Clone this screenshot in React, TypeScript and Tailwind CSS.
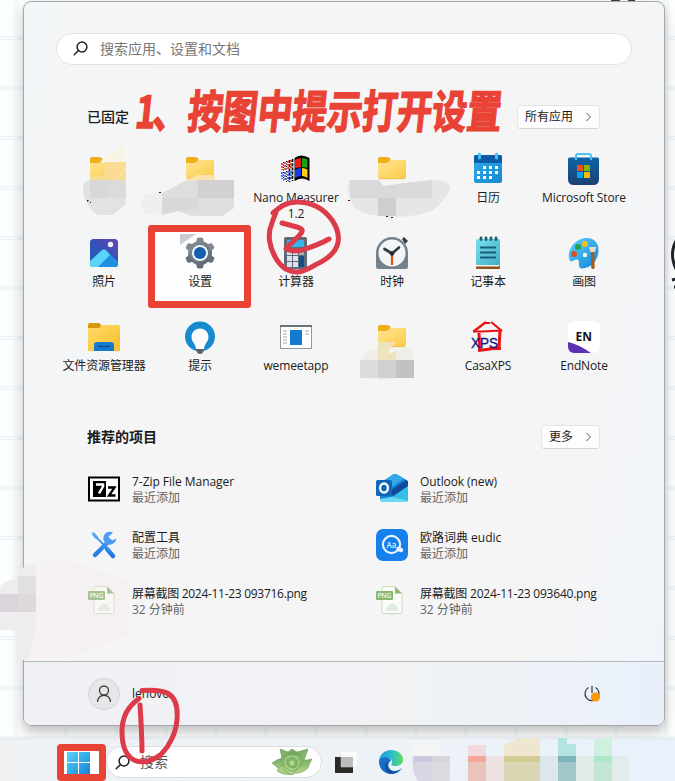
import React from "react";

const Svg = ({ children }: { children: React.ReactNode }) => (
  <svg width="32" height="32" viewBox="0 0 32 32" className="block shrink-0 overflow-visible">
    {children}
  </svg>
);

const Defs = () => (
  <svg width="0" height="0" className="absolute">
    <defs>
      <linearGradient id="fold" x1="0" y1="0" x2="1" y2="1">
        <stop offset="0" stopColor="#ffe596" />
        <stop offset="1" stopColor="#fccb45" />
      </linearGradient>
      <linearGradient id="foldBig" x1="0" y1="0" x2="1" y2="1">
        <stop offset="0" stopColor="#ffdc68" />
        <stop offset="1" stopColor="#f8bd2b" />
      </linearGradient>
      <linearGradient id="photo" x1="0" y1="1" x2="1" y2="0">
        <stop offset="0" stopColor="#1466c0" />
        <stop offset="0.5" stopColor="#3451b8" />
        <stop offset="1" stopColor="#6a45ae" />
      </linearGradient>
      <linearGradient id="sky" x1="0" y1="0" x2="1" y2="1">
        <stop offset="0" stopColor="#5ad4fa" />
        <stop offset="1" stopColor="#1583d8" />
      </linearGradient>
      <linearGradient id="cal" x1="0" y1="0" x2="1" y2="1">
        <stop offset="0" stopColor="#30adea" />
        <stop offset="1" stopColor="#1587d2" />
      </linearGradient>
      <linearGradient id="store" x1="0" y1="0" x2="0" y2="1">
        <stop offset="0" stopColor="#0d64a9" />
        <stop offset="1" stopColor="#1b3f72" />
      </linearGradient>
      <linearGradient id="steel" gradientUnits="userSpaceOnUse" x1="4" y1="2" x2="28" y2="28">
        <stop offset="0" stopColor="#8b949c" />
        <stop offset="1" stopColor="#5a636d" />
      </linearGradient>
      <linearGradient id="note" x1="0" y1="0" x2="1" y2="1">
        <stop offset="0" stopColor="#7be0ec" />
        <stop offset="1" stopColor="#43abc6" />
      </linearGradient>
      <linearGradient id="edge" x1="0" y1="0" x2="1" y2="0">
        <stop offset="0" stopColor="#1c9ddd" />
        <stop offset="0.55" stopColor="#2bc0cb" />
        <stop offset="1" stopColor="#62dc55" />
      </linearGradient>
      <linearGradient id="tool" gradientUnits="userSpaceOnUse" x1="0" y1="4" x2="0" y2="28">
        <stop offset="0" stopColor="#5aa8f8" />
        <stop offset="1" stopColor="#1f78e6" />
      </linearGradient>
      <linearGradient id="leaf" x1="0" y1="0" x2="0" y2="1">
        <stop offset="0" stopColor="#74aa60" />
        <stop offset="1" stopColor="#b8d989" />
      </linearGradient>
    </defs>
  </svg>
);

const Folder = () => (
  <Svg>
    <path d="M2 5q0-2 2-2h7q2 0 3 1.500l1 2L12 10H2z" fill="#efaf1c" />
    <path d="M2 9h8q1.600 0 2.500-1.200L14 6h16v17q0 2-2 2H4q-2 0-2-2z" fill="url(#fold)" />
    <path d="M3 24.700h26" stroke="#e9b549" strokeWidth=".7" />
  </Svg>
);

const Explorer = () => (
  <Svg>
    <path d="M0 3q0-2 2-2h9l3 3v4H0z" fill="#d49a0b" />
    <path d="M0 6h11l3-3h16q2 0 2 2v24H0z" fill="url(#foldBig)" />
    <path d="M6 29v-6q0-3 3-3h14q3 0 3 3v6z" fill="#147bd0" />
    <path d="M10 24.500h12" stroke="#0a4e8e" strokeWidth="1.300" />
  </Svg>
);

const NanoFlag = () => (
  <Svg>
    <path d="M14.500 4Q21-1 29.500 4v23q-7-5-15 0z" fill="#000" />
    <path d="M15 6q3-2 6-2v9q-3 0-6 1.500z" fill="#f01c1c" />
    <path d="M22 4q3 0 5.500 1.500v8.500q-3-1-5.500-1z" fill="#14a514" />
    <path d="M15 16q3-2 6-2v8q-3 0-6 2z" fill="#123df0" />
    <path d="M22 14q3 0 5.500 1.500V24q-3-2-5.500-2z" fill="#ffcf18" />
    <path d="M12.500 5v22M9.500 6v22" stroke="#000" strokeWidth="1.600" strokeDasharray="3 1.200" />
    <path d="M6.500 7v21M3.500 8v20" stroke="#000" strokeWidth="1" strokeDasharray="1 1.500" />
    <path d="M11 6v9M8 7v9M5 8v8M2 9v7" stroke="#f01c1c" strokeWidth="1.500" strokeDasharray="2 1" />
    <path d="M11 17v9M8 17v10M5 18v8M2 18v7" stroke="#1c49f0" strokeWidth="1.500" strokeDasharray="2 1" />
  </Svg>
);

const Calendar = () => (
  <Svg>
    <rect x="2" y="1" width="28" height="28" rx="2" fill="url(#cal)" />
    <path d="M2 9V3q0-2 2-2h24q2 0 2 2v6z" fill="#0d5aa5" />
    <path d="M7.500 0v4M24.500 0v4" stroke="#43c4f4" strokeWidth="3" strokeLinecap="round" />
    <path d="M11 12h3v3h-3zM17 12h3v3h-3zM23 12h3v3h-3zM5 17h3v3H5zM11 17h3v3h-3zM17 17h3v3h-3zM23 17h3v3h-3zM5 22h3v3H5zM11 22h3v3h-3zM17 22h3v3h-3z" fill="#fff" />
  </Svg>
);

const Store = () => (
  <Svg>
    <path d="M0 5q0-1.500 1.500-1.500h28Q31 3.500 31 5v20q0 6-6 6H6q-6 0-6-6z" fill="url(#store)" />
    <path d="M8 6V2q0-2 2-2h11q2 0 2 2v4" fill="none" stroke="#4cc3ef" strokeWidth="2" />
    <path d="M9 11h6v6H9z" fill="#f25022" />
    <path d="M16 11h6v6h-6z" fill="#7fba00" />
    <path d="M9 18h6v6H9z" fill="#00a4ef" />
    <path d="M16 18h6v6h-6z" fill="#ffb900" />
  </Svg>
);

const Photos = () => (
  <Svg>
    <clipPath id="photoClip"><rect x="2" y="1" width="28" height="28" rx="3.500" /></clipPath>
    <g clipPath="url(#photoClip)">
      <rect x="2" y="1" width="28" height="28" fill="url(#photo)" />
      <path d="M0 26 13.500 12.500q2.500-2.500 5 0L32 26v5H0z" fill="#1f8fe0" />
      <path d="M-2 27 13.500 12.500q2.500-2 5 .5L22 17 8 31z" fill="#5bd3f6" />
      <circle cx="22.500" cy="6.500" r="2.700" fill="#ecf3ff" />
    </g>
  </Svg>
);

const Settings = () => (
  <Svg>
    <g fill="url(#steel)">
      <circle cx="16" cy="15" r="12" />
      <path d="m12 5 1-5q3-1 6 0l1 5zM12 25l1 5q3 1 6 0l1-5z" />
      <path d="m12 5 1-5q3-1 6 0l1 5zM12 25l1 5q3 1 6 0l1-5z" transform="rotate(60 16 15)" />
      <path d="m12 5 1-5q3-1 6 0l1 5zM12 25l1 5q3 1 6 0l1-5z" transform="rotate(-60 16 15)" />
    </g>
    <circle cx="16" cy="15" r="8" fill="#eef4f9" />
    <circle cx="16" cy="15" r="6" fill="#155dad" />
  </Svg>
);

const Calculator = () => (
  <Svg>
    <rect x="4" y="-1" width="23" height="32" rx="2" fill="#5e6b78" />
    <rect x="7" y="2" width="17" height="7" rx=".8" fill="#35b7ea" />
    <path d="M7 12h5v5H7zM13 12h5v5h-5zM7 18h5v5H7zM13 18h5v5h-5zM7 24h5v5H7zM13 24h5v5h-5z" fill="#dce3e8" />
    <path d="M19 12h5v5h-5z" fill="#a6b2bd" />
    <path d="M19 18h5v11h-5z" fill="#164f87" />
  </Svg>
);

const Clock = () => (
  <Svg>
    <path d="m26 1 2-2 4 4-3 3z" fill="#343c45" />
    <path d="M0 15a16 16 0 0 1 32 0v14q0 2-2 2H2q-2 0-2-2z" fill="#75818b" />
    <circle cx="16" cy="15" r="13.500" fill="#f3f5f6" />
    <path d="m16 15.500-7.500-4.500M16 15.500l7-6" stroke="#343b42" strokeWidth="2.700" strokeLinecap="round" />
    <path d="M16 16v11" stroke="#db5420" strokeWidth="2.200" />
    <circle cx="16" cy="15.500" r="2.200" fill="#252b31" />
  </Svg>
);

const Notepad = () => (
  <Svg>
    <path d="M4 26h24v4q0 1-1 1H5q-1 0-1-1z" fill="#8b5219" />
    <path d="M4 26h24l-1 2.500H4z" fill="#f8f1e2" />
    <rect x="4" y="1" width="24" height="26" rx="1.500" fill="url(#note)" />
    <path d="M9 0v1.500M14 0v1.500M19 0v1.500M24 0v1.500" stroke="#185f70" strokeWidth="2.800" strokeLinecap="round" />
    <path d="M8 9.500h16M8 14.500h16M8 19.500h16" stroke="#155f78" strokeWidth="2" />
  </Svg>
);

const Paint = () => (
  <Svg>
    <path d="M17 0C26-1 31 5 30.500 13c-.5 10-8 17-16 17.500-6 0-2-7-4.500-8.500-3-2-6 4-8.500 0C-2 12 7 1 17 0z" fill="url(#sky)" />
    <circle cx="17" cy="17" r="2.200" fill="#f5f7f9" />
    <circle cx="17" cy="6" r="3" fill="#f4bd24" />
    <circle cx="10" cy="9" r="3" fill="#21a34d" />
    <circle cx="6" cy="16" r="3" fill="#d95025" />
    <path d="M21 9h7.500l-2 5.500h-4z" fill="#eadac0" />
    <path d="M23 14h3.200l.5 16q-2 2-3.500 0z" fill="#a35d20" />
  </Svg>
);

const Tips = () => (
  <Svg>
    <circle cx="16" cy="14.500" r="15" fill="#178bcf" />
    <path d="M16 6.500c-5 0-8.500 4-8.500 8.500 0 5 4 6.500 4.500 12h8c.5-5.500 4.500-7 4.500-12 0-4.500-3.500-8.500-8.500-8.500z" fill="#fbfbfb" />
    <path d="M12 27h8q-.5 5-4 5t-4-5z" fill="#5d6468" />
  </Svg>
);

const Wemeet = () => (
  <Svg>
    <path d="M.5 3.500h31v23H.500z" fill="#fff" stroke="#8e989f" />
    <path d="M0 3h32v2H0z" fill="#68737a" />
    <rect x="10" y="8" width="12" height="15" fill="#157bd0" />
    <path d="M3 9h4M3 12h4M3 15h4M3 18h4M3 21h4M25 9h4M25 12h4" stroke="#a6a6a6" />
  </Svg>
);

const CasaXPS = () => (
  <Svg>
    <g stroke="#ec1111" fill="none">
      <path d="M1.500 9.500 14 0M19 0l11 9" strokeWidth="2.200" />
      <path d="M1 9.500h10M10 9.500l19-1M12 1h6" strokeWidth="2" />
      <path d="M7 11l1 18M28 9l-1 17" strokeWidth="3" />
      <path d="M6 28.500l13-1.500M17 26.500h12" strokeWidth="2.800" />
    </g>
    <text x="-1" y="26" fontFamily="Liberation Sans, Arial, sans-serif" fontSize="14.500" fill="#101184" stroke="#101184" strokeWidth=".3" textLength="27" lengthAdjust="spacingAndGlyphs">XPS</text>
  </Svg>
);

const EndNote = () => (
  <Svg>
    <clipPath id="enClip"><rect y="-1" width="32" height="32" rx="6" /></clipPath>
    <g clipPath="url(#enClip)">
      <rect y="-1" width="32" height="32" fill="#fff" />
      <path d="M0 20q10 2 23 11H0z" fill="#5b32b4" />
    </g>
    <text x="7.500" y="19" fontFamily="Noto Sans, sans-serif" fontWeight="700" fontSize="12.500" fill="#111" textLength="16.500" lengthAdjust="spacingAndGlyphs">EN</text>
  </Svg>
);

const SevenZip = () => (
  <Svg>
    <path d="M1 4.500h30v23H1z" fill="#fff" stroke="#000" strokeWidth="2" />
    <path d="M5 8h13v16H5z" fill="#000" />
    <path d="M8 11.500h7v2l-4 7" fill="none" stroke="#fff" strokeWidth="2.500" />
    <path d="M20 14.500h6.500l-5.500 8h6.500" fill="none" stroke="#000" strokeWidth="2.300" />
  </Svg>
);

const Tools = () => (
  <Svg>
    <g fill="none" stroke="url(#tool)" strokeLinecap="round">
      <path d="m6 6 12 12" strokeWidth="1.800" />
      <path d="m5.500 5 3 3.500" strokeWidth="3.200" />
      <path d="m19 20 6 7" strokeWidth="4.500" />
      <path d="M7 26 20 13" strokeWidth="4.500" />
    </g>
    <path d="M25 3.500a6.500 6.500 0 1 0 3.300 6l-4 2-4-3.500z" fill="#4b9bf3" />
  </Svg>
);

const Png = () => (
  <Svg>
    <path d="M8 1.500h11l7 7v18q0 2-2 2H8q-2 0-2-2v-23q0-2 2-2z" fill="#fbfcf9" stroke="#cbdcb9" />
    <path d="M19 1.500v7h7z" fill="#8fb878" />
    <path d="M10 26q-1-4 2-4 1-5 5-3 3-1 3 2 3 1 2 5z" fill="#e1ece1" />
    <rect y="6" width="17" height="9" rx="1" fill="#8ab673" />
    <text x="1.500" y="13.200" fontFamily="Open Sans, sans-serif" fontSize="7" fontWeight="600" fill="#edf7e7" textLength="14">PNG</text>
  </Svg>
);

const Outlook = () => (
  <Svg>
    <path d="M4 10 17 1.500q2-1 4 0L32 8v18q0 3-3 3H8q-4 0-4-4z" fill="#1685d9" />
    <path d="m6 9 11-7.500q2-1 4 0l7 4-13 9z" fill="#32a8e8" />
    <path d="m15 17 15-10 2 1.500v5L17 24z" fill="#124b9b" />
    <path d="M32 13v13q0 3-3 3H8q-3 0-4-3l12-2z" fill="#34bde9" />
    <path d="m16 24 15.500 3.500q-1 1.500-2.500 1.500H8q-3 0-4-3z" fill="#6bdaf3" />
    <rect y="7" width="16" height="16" rx="1.500" fill="#1068bd" />
    <ellipse cx="8" cy="15" rx="3.900" ry="4.500" fill="none" stroke="#fff" strokeWidth="2.300" />
  </Svg>
);

const Eudic = () => (
  <Svg>
    <rect width="32" height="32" rx="7" fill="#1680ed" />
    <circle cx="15.500" cy="15.500" r="8.600" fill="none" stroke="#e9f6ff" strokeWidth="2.200" />
    <path d="m22.500 20 2.500 1" stroke="#e9f6ff" strokeWidth="4.500" strokeLinecap="round" />
    <text x="10.500" y="18.500" fontFamily="Open Sans, sans-serif" fontSize="8" fontWeight="600" fill="#d8f0ff">Aa</text>
  </Svg>
);

const SearchIcon = () => (
  <svg width="15" height="15" viewBox="0 0 15 15" fill="none" stroke="#222" strokeWidth="1.500" strokeLinecap="round">
    <circle cx="9" cy="6" r="4.900" />
    <path d="m5.500 9.500-4.300 4.300" />
  </svg>
);

const MoreButton = ({ children }: { children: React.ReactNode }) => (
  <button className="flex h-6 items-center gap-3 rounded border border-[#e3e4e5] border-b-[#d3d4d5] bg-[#fdfdfd] px-[7px] text-[12px] text-[#1b1b1b]">
    {children}
    <svg width="7" height="10" viewBox="0 0 7 10" fill="none" stroke="#555" className="block">
      <path d="m1.500 1 4 4-4 4" />
    </svg>
  </button>
);

const apps: { name: string; icon: React.ReactNode; marked?: boolean }[] = [
  { name: "", icon: <Folder /> },
  { name: "", icon: <Folder /> },
  { name: "Nano Measurer 1.2", icon: <NanoFlag /> },
  { name: "", icon: <Folder /> },
  { name: "日历", icon: <Calendar /> },
  { name: "Microsoft Store", icon: <Store /> },
  { name: "照片", icon: <Photos /> },
  { name: "设置", icon: <Settings />, marked: true },
  { name: "计算器", icon: <Calculator /> },
  { name: "时钟", icon: <Clock /> },
  { name: "记事本", icon: <Notepad /> },
  { name: "画图", icon: <Paint /> },
  { name: "文件资源管理器", icon: <Explorer /> },
  { name: "提示", icon: <Tips /> },
  { name: "wemeetapp", icon: <Wemeet /> },
  { name: "", icon: <Folder /> },
  { name: "CasaXPS", icon: <CasaXPS /> },
  { name: "EndNote", icon: <EndNote /> },
];

const recent = [
  { name: "7-Zip File Manager", note: "最近添加", icon: <SevenZip />, fit: "tracking-[-0.04px]" },
  { name: "Outlook (new)", note: "最近添加", icon: <Outlook />, fit: "tracking-[-0.1px]" },
  { name: "配置工具", note: "最近添加", icon: <Tools />, fit: "" },
  { name: "欧路词典 eudic", note: "最近添加", icon: <Eudic />, fit: "" },
  { name: "屏幕截图 2024-11-23 093716.png", note: "32 分钟前", icon: <Png />, fit: "tracking-[-0.29px]" },
  { name: "屏幕截图 2024-11-23 093640.png", note: "32 分钟前", icon: <Png />, fit: "tracking-[-0.22px]" },
];

/* Privacy mosaic over the panel and the taskbar */
const Mosaic = () => (
  <svg width="675" height="781" viewBox="0 0 675 781" className="pointer-events-none absolute inset-0">
    <path d="M611 0h9v1h-9zM628 0h7v1h-7z" fill="#493238" />
    <path d="M676 241q-7 13 0 28M672 280l4-1M674 287h3" fill="none" stroke="#20222a" strokeWidth="3" />
    <path d="M102 160 125 143v20h-23z" fill="#f6f4e4" />
    <path d="M104 162h22v18H90v-4h14z" fill="#f9dc91" />
    <path d="m117 178 9-9" stroke="#fff2cb" />
    <path d="M90 180h36v24l-13 11H97l-7-7q-7-10-7-19 0-9 7-9z" fill="#e2e2e2" />
    <path d="M90 180h18v18H90z" fill="#d8d8d8" />
    <path d="M108 180h18v18h-18z" fill="#dcdbd9" />
    <path d="M87 200h1.500v1.500H87zM90 202h1v1h-1zM159 192h2v1h-2z" fill="#222" />
    <path d="M145 195q9-4 17-1v21h-15q-11-8-2-20z" fill="#efefef" />
    <path d="m185 181 13-6h17v5z" fill="#fae3ab" />
    <path d="m162 193 23-12 13-1h36v28l-12 8h-30l-14-5-16 4z" fill="#dedede" />
    <path d="M198 180h36v18h-36z" fill="#d1d1d1" />
    <path d="M162 198h36v11l-20 2-16 3z" fill="#d8d8d8" />
    <path d="M350 180h29l4 6 49-6q20 1 18 9-3 10-18 22-24 8-48 5-30-1-33-16-6-13-1-20z" fill="#e6e6e6" />
    <path d="M350 180h29l4 6 33-4v16h-66z" fill="#d9d9d9" />
    <path d="m396 184 36-4v18h-36z" fill="#dadada" />
    <path d="M378 198h18v18h-18z" fill="#cecece" />
    <path d="M348 200h2v1h-2zM386 216h2v1h-2zM391 217h2v1h-2z" fill="#222" />
    <path d="M180 234h16l-16 11z" fill="#c8ccd1" />
    <path d="M378 342h17l-8 12 19-7q9 0 8 17-4 15-30 16-24 0-24-16 0-13 18-15z" fill="#eeede8" />
    <path d="M378 342h17l-8 12 9-3v9h-18z" fill="#efe3be" />
    <path d="M360 360h18v18h-18z" fill="#dddddc" />
    <path d="M378 360h18v18h-18z" fill="#d1d0ce" />
    <path d="M396 360h18v18h-18z" fill="#c3c2c1" />
    <path d="M22 570q5-9 15-8l30-2 61 20v54l-50 22-56 4z" fill="#f7e9ea" fillOpacity=".25" />
    <path d="M0 590q4-11 18-12v-5l8-8h10v65l-8 30H18v-30H0z" fill="#eeecee" />
    <path d="M18 576h18v18H18z" fill="#e2dfe1" />
    <path d="M0 594h18v18H0z" fill="#d9d5da" />
    <path d="M18 594h18v18H18z" fill="#dcd8dc" />
    <path d="M414 740h26v16h-28q-2-9 2-16z" fill="#f3f4f4" />
    <path d="M413 756h37v25h-32q-7-8-5-25z" fill="#d9d5e5" />
    <path d="M432 762h18v19h-18z" fill="#dcdce0" />
    <path d="M414 756h18v6h-18z" fill="#cbc7df" />
    <path d="M432 756h18v6h-18z" fill="#d7d6dc" />
    <path d="M468 745h18v11h-18z" fill="#f0dadd" />
    <path d="M468 756h18v6h-18z" fill="#f2a799" />
    <path d="M468 762h18v19h-18z" fill="#eac3bc" />
    <path d="M486 756h18v25h-18z" fill="#ede1e2" />
    <path d="m504 745 15-7h21v18h-36z" fill="#efe6d0" />
    <path d="M504 756h36v6h-36z" fill="#d2cb92" />
    <path d="M504 762h36v19h-36z" fill="#dbd7b4" />
    <path d="M540 756h18v25h-18z" fill="#dce7ea" />
    <path d="M558 738h9v6h9v12h-18z" fill="#b3e3e2" />
    <path d="M558 756h18v6h-18z" fill="#7db5bb" />
    <path d="M558 762h18v19h-18z" fill="#a3c8cb" />
    <path d="M576 756h18v25h-18z" fill="#dfeae9" />
    <path d="m594 740 8-2h10v18h-18z" fill="#d0f0df" />
    <path d="M594 756h18v6h-18z" fill="#ace8c7" />
    <path d="M594 762h18v19h-18z" fill="#c2e5d5" />
    <path d="M612 756h17v25h-17z" fill="#e2ecec" />
  </svg>
);

/* Hand-drawn step markers */
const Strokes = () => (
  <svg width="675" height="781" viewBox="0 0 675 781" className="pointer-events-none absolute inset-0" fill="none" stroke="#dc3b49" strokeWidth="5" strokeLinecap="round" strokeLinejoin="round">
    <path d="M273 213c7-6 13-11 24-11 15 0 27 7 35 18 6 9 8 18 5 26-4 10-13 15-22 19-7 4-11 7-18 7-9 0-15-4-20-12-8-12-10-26-5-37 1-4 3-7 4-11z" />
    <path d="M282 223l13 3.500c5 1.500 8 2.500 7 5-2 5-11 11-16 17 4 3 12 3 18 1 9-3 17-6 25-10.500" />
    <path d="M142 690.500c8-.5 20-.5 26 3 7 4 10 14 9 26-1 14-8 27-16 35-9 7-19 9-26 6-9-4-13-14-13-29 0-15 7-26 17-33" />
    <path d="M140 705c1 16 2 31 2 46" />
  </svg>
);

export default function App() {
  return (
    <div className="relative flex h-[781px] w-[675px] flex-col overflow-hidden bg-[#fcfefe] bg-[linear-gradient(to_bottom,transparent_36px,#e9f1f6_36px,#f6fafb_38px,#e9f1f6_40px,transparent_40px),linear-gradient(to_right,transparent_14px,#eff5f8_14px,#f8fbfc_16px,#eff5f8_18px,transparent_18px)] bg-[size:50px_50px] font-['Open_Sans','Noto_Sans_CJK_SC',sans-serif] text-[12px] text-[#1b1b1b]">
      <Defs />
      <main className="mt-px ml-[23px] flex h-[725px] w-[642px] shrink-0 flex-col overflow-hidden rounded-lg border border-[#a4a6a9] bg-[linear-gradient(100deg,#f3f6f8_0%,#f5f5f5_22%,#f5f5f5_78%,#f0f4fa_100%)] shadow-[0_6px_12px_rgba(0,0,0,0.24)]">
        <div className="mt-[31px] ml-[32px] flex h-8 w-[576px] shrink-0 items-center gap-3 rounded-full border border-[#e2e3e4] bg-white pb-0.5 pl-4 text-[14px] text-[#777]">
          <SearchIcon />
          <span>搜索应用、设置和文档</span>
        </div>
        <div className="mt-10 flex h-6 shrink-0 items-center justify-between pr-16 pl-[63px]">
          <h2 className="pb-0.5 text-[14px] font-medium">已固定</h2>
          <MoreButton>所有应用</MoreButton>
        </div>
        <div className="mt-[25px] ml-8 grid w-[576px] shrink-0 auto-rows-[84px] grid-cols-6">
          {apps.map((a, i) => (
            <div key={i} className="relative isolate flex flex-col items-center gap-1">
              {a.marked && (
                <div className="absolute top-[-13px] left-[-4px] -z-10 h-[83px] w-[103px] rounded-[3px] border-[7px] border-[#e94335] bg-[#fefefe]" />
              )}
              {a.icon}
              <span className="max-w-[92px] text-center leading-4 tracking-[-0.13px]">{a.name}</span>
            </div>
          ))}
        </div>
        <div className="mt-[19px] flex h-6 shrink-0 items-center justify-between pr-16 pl-[63px]">
          <h2 className="pb-0.5 text-[14px] font-bold">推荐的项目</h2>
          <MoreButton>更多</MoreButton>
        </div>
        <div className="mt-3 ml-16 grid shrink-0 auto-rows-[56px] grid-cols-[288px_1fr]">
          {recent.map((r) => (
            <div key={r.name} className="flex items-center gap-3">
              {r.icon}
              <div className="pt-0.5 leading-4">
                <p className={r.fit}>{r.name}</p>
                <p className="text-[#656565]">{r.note}</p>
              </div>
            </div>
          ))}
        </div>
        <footer className="mt-auto flex h-16 shrink-0 items-center border-t border-[#b5b8bb] bg-[linear-gradient(90deg,#eff1f5,#f0f2f4_60%,#e9f0fa)] pr-[63px] pl-16">
          <div className="flex size-8 items-center justify-center rounded-full border border-[#d2d3d4] bg-[#e6e7e8]">
            <svg width="16" height="18" viewBox="0 0 16 18" fill="none" stroke="#444" strokeWidth="1.400">
              <circle cx="8" cy="5.500" r="4.500" />
              <path d="M1.500 17c0-9 13-9 13 0" />
            </svg>
          </div>
          <span className="ml-3">lenovo</span>
          <svg width="18" height="18" viewBox="0 0 18 18" className="ml-auto block" fill="none" stroke="#3c4044" strokeWidth="1.300">
            <path d="M9 1v7M5.500 2.500a7 7 0 1 0 7 0" />
            <circle cx="12.500" cy="12" r="4.600" fill="#fb9706" stroke="none" />
          </svg>
        </footer>
      </main>
      <nav className="mt-3 flex h-[43px] shrink-0 border-t border-[#dfe3e7] bg-[linear-gradient(90deg,#eff1f3,#edf2f7_60%,#e8f1fc)] pl-[57px]">
        <div className="mt-[5px] flex h-[37px] w-[49px] shrink-0 items-center rounded border-[7px] border-[#e94335] bg-white pl-[3px]">
          <svg width="24" height="24" viewBox="0 0 24 24" className="block" fill="url(#sky)">
            <path d="M0 1h11v10H0zM12 1h11v10H12zM0 12h11v11H0zM12 12h11v11H12z" />
          </svg>
        </div>
        <div className="mt-[7px] flex h-8 w-[216px] shrink-0 items-center rounded-full border border-[#dadddf] bg-white pl-2 text-[14px] text-[#555]">
          <SearchIcon />
          <span className="ml-[10px] pb-0.5">搜索</span>
          <svg width="40" height="28" viewBox="0 0 40 28" className="ml-auto mr-[9px] block" fill="url(#leaf)" stroke="#5f914d" strokeWidth=".5" strokeLinejoin="round">
            <path d="m8 1 8 3 4-3 5 3 11-3-4 12-12 8-9-6z" />
            <path d="M0 15q5-4 11-5l8 16Q9 26 6 20zM40 11q-3 5-4 9-6 6-14 5l7-12z" />
            <path d="M5 23q2-6 10-6l7 9q-9 2-17-3z" fill="#a8cf82" />
            <path d="M10 9q5-5 10-4 8-2 11 6 0 6-5 9l-6 7q-8-3-9-9-3-4-1-9z" />
            <path d="M12 11q4-5 9-4 6 0 7 6 1 8-8 10-9-2-8-12z" fill="#a9d184" />
            <path d="M15 11q6-4 10 1 2 7-4 8-8-1-6-9z" fill="#83b768" />
            <path d="M17 13q5-3 6 2-1 4-4 3-3-2-2-5z" fill="#b4d98f" />
          </svg>
        </div>
        <svg width="24" height="24" viewBox="0 0 24 24" className="mt-3 ml-3 block">
          <path d="M1 6h18v16H1z" fill="#292929" />
          <path d="M7 0h17v16H7z" fill="#fafafa" stroke="#ddd" strokeWidth=".5" />
          <path d="M7 6h12v10H7z" fill="#bdbdbd" />
        </svg>
        <svg width="24" height="24" viewBox="0 0 24 24" className="mt-[11px] ml-[21px] block">
          <path d="M0 12C0 5 5 0 12 0c8 0 13 6 12 11-1 4-5 5-8 5-5 0-4-2-3-3 1-2-1-5-5-5-4 0-8 2-8 6z" fill="url(#edge)" />
          <path d="M0 11c2-5 11-5 12 0-3 1-4 6 0 9 3 2 7 1 11-2-4 7-13 8-19 3C1 18 0 15 0 11z" fill="#166fc9" />
          <path d="M9 12c-3 6 3 11 10 9-6 5-13 2-13-4 0-3 1-5 3-5z" fill="#104e9f" />
        </svg>
      </nav>
      <Mosaic />
      <div className="pointer-events-none absolute top-[80px] left-[133px] origin-left -skew-x-6 font-['Noto_Sans_CJK_SC',sans-serif] text-[45px] leading-[58px] font-bold whitespace-nowrap text-[#e94335] [-webkit-text-stroke:1.5px_#e94335]">
        <p className="flex origin-left scale-x-[0.775]">
          <span className="translate-x-1">1</span>
          <span>、按图中提示打开设置</span>
        </p>
      </div>
      <Strokes />
    </div>
  );
}
